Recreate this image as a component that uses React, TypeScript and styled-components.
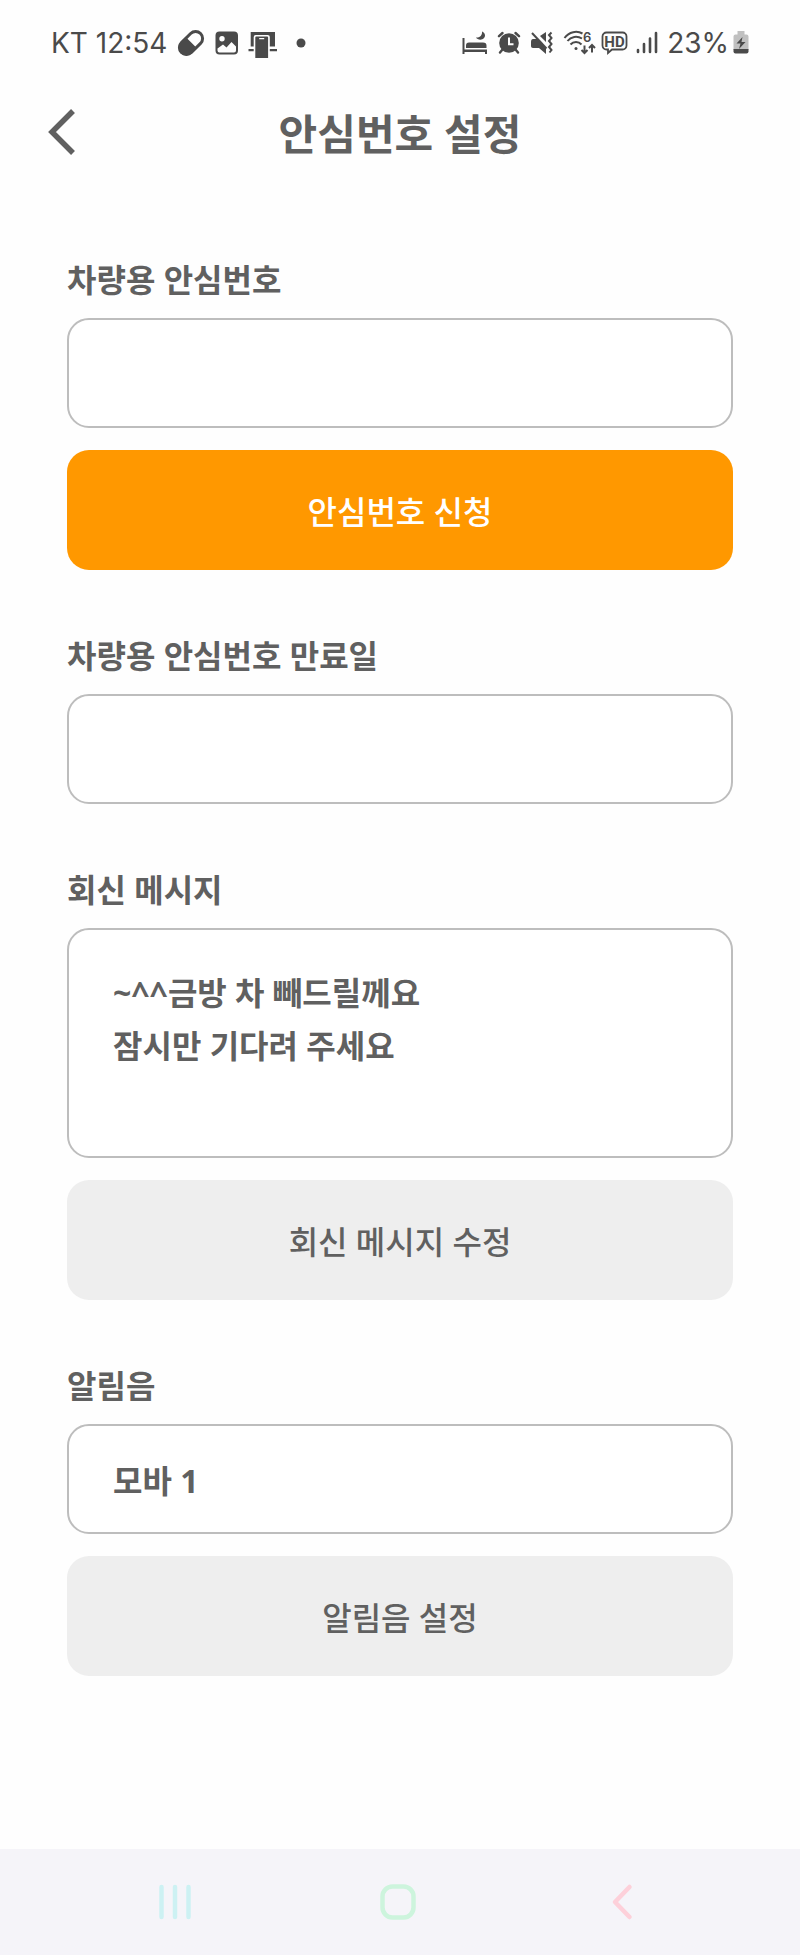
import React from 'react';
import styled, { createGlobalStyle } from 'styled-components';

const ink = '#606060';
const statusInk = '#4a4a4a';

const GlobalStyle = createGlobalStyle`
  *, *::before, *::after { box-sizing: border-box; }
  html, body { margin: 0; background: #fefefe; }
  body, input, textarea, button {
    font-family: "Noto Sans", "Noto Sans CJK KR", sans-serif;
    color: ${ink};
  }
`;

const Screen = styled.div`
  display: flex;
  flex-direction: column;
  min-height: 100vh;
`;

const StatusBar = styled.div`
  display: flex;
  align-items: center;
  justify-content: space-between;
  height: 86px;
  padding: 0 51px 0 51px;
  color: ${statusInk};
  font-family: Inter, sans-serif;
  font-size: 28px;
  font-weight: 400;
  line-height: 30px;
`;

const StatusGroup = styled.div<{ $gap: number }>`
  display: flex;
  align-items: center;
  gap: ${({ $gap }) => $gap}px;
`;

const StatusIcon = styled.svg`
  display: block;
  flex: none;
  fill: currentColor;
`;

const Header = styled.header`
  display: grid;
  grid-template-columns: 1fr auto 1fr;
  align-items: center;
  height: 92px;
  padding: 0 40px;
`;

const BackButton = styled.button`
  display: flex;
  justify-self: start;
  padding: 0 8px;
  border: 0;
  background: none;
`;

const Title = styled.h1`
  margin: 0;
  padding-top: 4px;
  font-size: 42px;
  font-weight: 700;
  line-height: 60px;
`;

const Form = styled.form`
  display: flex;
  flex: 1;
  flex-direction: column;
  gap: 60px;
  padding: 76px 67px 100px;
`;

const Section = styled.section`
  display: flex;
  flex-direction: column;
`;

const Label = styled.label`
  padding-top: 2px;
  margin-bottom: 14px;
  font-size: 32px;
  font-weight: 700;
  line-height: 48px;
`;

const fieldBase = `
  display: block;
  width: 100%;
  border: 2px solid #bdbdbd;
  border-radius: 22px;
  background: #fff;
  font-size: 32px;
  font-weight: 700;
  outline: none;
`;

const TextField = styled.input`
  ${fieldBase}
  height: 110px;
  padding: 0 44px;
`;

const MessageField = styled.textarea`
  ${fieldBase}
  height: 230px;
  padding: 36px 44px 30px;
  line-height: 53px;
  resize: none;
`;

const ActionButton = styled.button<{ $primary?: boolean }>`
  height: 120px;
  margin-top: 22px;
  border: 0;
  border-radius: 22px;
  background: ${({ $primary }) => ($primary ? '#ff9800' : '#eeeeee')};
  color: ${({ $primary }) => ($primary ? '#ffffff' : ink)};
  font-size: 32px;
  font-weight: 500;
`;

const NavBar = styled.nav`
  display: grid;
  grid-template-columns: repeat(3, 1fr);
  height: 106px;
  padding: 0 66px 0 63px;
  background: #f5f4f9;
`;

const NavButton = styled.button`
  display: flex;
  align-items: center;
  justify-content: center;
  padding: 0;
  border: 0;
  background: none;
`;

const NavIcon = styled.svg`
  fill: none;
  stroke-width: 4.5;
  stroke-linecap: round;
  stroke-linejoin: round;
`;

const PillIcon = () => (
  <StatusIcon width="28" height="30" viewBox="0 0 28 30">
    <g transform="rotate(-45 14 15)">
      <rect x="0.500" y="8" width="27" height="14" rx="7" fill="none" stroke="currentColor" strokeWidth="3" />
      <path d="M14.500 7H7.500a8 8 0 0 0 0 16h7z" />
    </g>
  </StatusIcon>
);

const PictureIcon = () => (
  <StatusIcon width="24" height="30" viewBox="0 0 24 30">
    <path
      fillRule="evenodd"
      d="M4.500 3.500h14.500a4 4 0 0 1 4 4v15a4 4 0 0 1-4 4H4.500a4 4 0 0 1-4-4v-15a4 4 0 0 1 4-4zM7 8a2.700 2.700 0 1 0 0 5.400A2.700 2.700 0 1 0 7 8zM2.500 20.500v2a2 2 0 0 0 2 2h14.500a2 2 0 0 0 2-2v-4l-4.500-4.500-5 5.500-3.500-3z"
    />
  </StatusIcon>
);

const DeviceIcon = () => (
  <StatusIcon width="30" height="32" viewBox="0 0 30 32">
    <path d="M2.700 5H27v14.500h-5.200V10a2 2 0 0 0-2-2H7.700a2 2 0 0 0-2 2v9.500h-3zM.5 22H5.700v2.200H.5zM21.800 22H29v2.200h-7.200z" />
    <path fillRule="evenodd" d="M8.300 9.500h10.800a1 1 0 0 1 1 1v20.500H7.300V10.500a1 1 0 0 1 1-1zM11.200 11v1.200h5V11z" />
  </StatusIcon>
);

const DotIcon = () => (
  <StatusIcon width="10" height="30" viewBox="0 0 10 30">
    <circle cx="5" cy="15" r="4.500" />
  </StatusIcon>
);

const BedIcon = () => (
  <StatusIcon width="26" height="30" viewBox="0 0 26 30">
    <path d="M.5 10h2v11.500H25v4.500h-2v-2H2.500v2h-2zM4 20v-2.500c0-2 1-3 3-3h14c2.500 0 3.500 1 3.500 3V20z" />
    <path d="M20 3.500C20.500 7 18 10 14 9.500c1.500 2.500 6 3 8 .5 2-2 1-5.500-2-6.500z" />
  </StatusIcon>
);

const AlarmIcon = () => (
  <StatusIcon width="24" height="30" viewBox="0 0 24 30">
    <circle cx="12" cy="15" r="9.800" />
    <path
      d="M2 8.200l3.500-3.200M22 8.200L18.500 5M5.500 21.500L3 24.500M18.500 21.500l2.500 3"
      fill="none"
      stroke="currentColor"
      strokeWidth="2.400"
      strokeLinecap="round"
    />
    <path d="M12 9.500v6.700h4.500" fill="none" stroke="#fefefe" strokeWidth="2" />
  </StatusIcon>
);

const MuteIcon = () => (
  <StatusIcon width="24" height="30" viewBox="0 0 24 30">
    <path d="M10 8l6-4v10zM1 14c0-1.700.8-3 2-3h4l9 9v6l-7-6H3c-1.200 0-2-1-2-2z" />
    <path d="M2 5l14.500 15.500" fill="none" stroke="currentColor" strokeWidth="2" />
    <path
      d="M21.500 4.500l-2.500 2.500 2.500 3-2.500 3 2.500 3-2.500 3 2.500 3-2 2.500"
      fill="none"
      stroke="currentColor"
      strokeWidth="2"
    />
  </StatusIcon>
);

const WifiIcon = () => (
  <StatusIcon width="34" height="30" viewBox="0 0 34 30">
    <g fill="none" stroke="currentColor" strokeWidth="2">
      <path d="M1.500 10C6 3.500 14 2.500 19.500 5.500M4.500 13C8 8.500 14 7.500 19 10.500M7.500 16.500c3-3.500 8-3.500 11 0" />
      <path d="M21.500 17.500v7M18.500 22l3 3 3-3M29 24.500v-7M26 20l3-3 3 3" />
    </g>
    <circle cx="13" cy="20.500" r="1.500" />
    <text x="20" y="13.500" fontSize="13" fontWeight="600" fontFamily="Inter, sans-serif">
      6
    </text>
  </StatusIcon>
);

const HdIcon = () => (
  <StatusIcon width="28" height="30" viewBox="0 0 28 30">
    <path
      d="M5.500 4.500h16a4 4 0 0 1 4 4v9a4 4 0 0 1-4 4H11L7 25v-3.500H5.500a4 4 0 0 1-4-4v-9a4 4 0 0 1 4-4z"
      fill="none"
      stroke="currentColor"
      strokeWidth="1.800"
    />
    <text x="13.500" y="18.500" fontSize="15" fontWeight="700" textAnchor="middle" fontFamily="Roboto, sans-serif">
      HD
    </text>
  </StatusIcon>
);

const SignalIcon = () => (
  <StatusIcon width="22" height="30" viewBox="0 0 22 30">
    <path
      d="M2 22v2M8 16v8M14 10.500V24M20 5v19"
      fill="none"
      stroke="currentColor"
      strokeWidth="2.600"
      strokeLinecap="round"
    />
  </StatusIcon>
);

const BatteryIcon = () => (
  <StatusIcon width="16" height="30" viewBox="0 0 16 30">
    <path d="M4.500 3h7v3.500h2a2 2 0 0 1 2 2V22H.5V8.500a2 2 0 0 1 2-2h2z" fill="#c0c0c0" />
    <path d="M.5 21h15v2.500a2 2 0 0 1-2 2h-11a2 2 0 0 1-2-2z" />
    <path d="M9.500 9L3.500 15.500h4L6 21l6.500-7h-4z" />
  </StatusIcon>
);

export default function App() {
  return (
    <Screen>
      <GlobalStyle />
      <StatusBar>
        <StatusGroup $gap={18}>
          <StatusGroup $gap={10}>
            <span>KT 12:54</span>
            <PillIcon />
            <StatusGroup $gap={9}>
              <PictureIcon />
              <DeviceIcon />
            </StatusGroup>
          </StatusGroup>
          <DotIcon />
        </StatusGroup>
        <StatusGroup $gap={9}>
          <BedIcon />
          <AlarmIcon />
          <MuteIcon />
          <StatusGroup $gap={4}>
            <WifiIcon />
            <StatusGroup $gap={7}>
              <HdIcon />
              <SignalIcon />
            </StatusGroup>
          </StatusGroup>
          <StatusGroup $gap={4}>
            <span>23%</span>
            <BatteryIcon />
          </StatusGroup>
        </StatusGroup>
      </StatusBar>

      <Header>
        <BackButton type="button" aria-label="뒤로">
          <svg width="28" height="46" viewBox="0 0 28 46" fill="none" stroke={ink} strokeWidth="5.5">
            <path d="M25 2L4 23l21 21" />
          </svg>
        </BackButton>
        <Title>안심번호 설정</Title>
      </Header>

      <Form>
        <Section>
          <Label htmlFor="safe-number">차량용 안심번호</Label>
          <TextField id="safe-number" type="text" />
          <ActionButton type="button" $primary>
            안심번호 신청
          </ActionButton>
        </Section>

        <Section>
          <Label htmlFor="expiry">차량용 안심번호 만료일</Label>
          <TextField id="expiry" type="text" />
        </Section>

        <Section>
          <Label htmlFor="reply">회신 메시지</Label>
          <MessageField id="reply" defaultValue={'~^^금방 차 빼드릴께요\n잠시만 기다려 주세요'} />
          <ActionButton type="button">회신 메시지 수정</ActionButton>
        </Section>

        <Section>
          <Label htmlFor="sound">알림음</Label>
          <TextField id="sound" type="text" defaultValue="모바 1" />
          <ActionButton type="button">알림음 설정</ActionButton>
        </Section>
      </Form>

      <NavBar>
        <NavButton type="button" aria-label="최근 앱">
          <NavIcon width="34" height="40" viewBox="0 0 34 40" stroke="#cdf1f3">
            <path d="M3.500 5v30M17 5v30M30.500 5v30" />
          </NavIcon>
        </NavButton>
        <NavButton type="button" aria-label="홈">
          <NavIcon width="40" height="40" viewBox="0 0 40 40" stroke="#cdf4dd">
            <rect x="4.500" y="4.500" width="31" height="31" rx="10" />
          </NavIcon>
        </NavButton>
        <NavButton type="button" aria-label="뒤로 가기">
          <NavIcon width="24" height="40" viewBox="0 0 24 40" stroke="#fdd0da">
            <path d="M19.500 5L5 20l14.500 15" />
          </NavIcon>
        </NavButton>
      </NavBar>
    </Screen>
  );
}
